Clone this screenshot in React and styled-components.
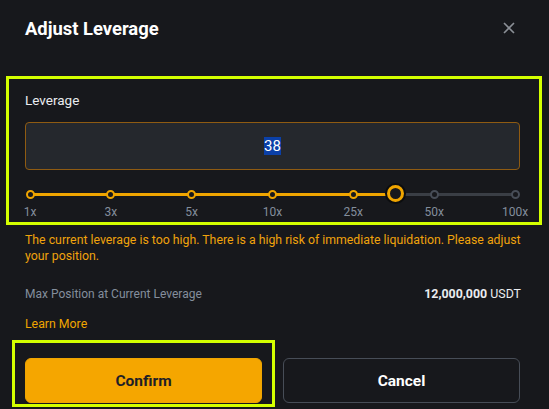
import React from 'react';
import styled, { createGlobalStyle } from 'styled-components';

const GlobalStyle = createGlobalStyle`
  body {
    margin: 0;
    background: #17181c;
    font-family: 'Roboto', 'Liberation Sans', sans-serif;
  }
`;

const Dialog = styled.div`
  width: 549px;
  height: 409px;
  overflow: hidden;
  background: #17181c;
  color: #eaecef;
`;

const Header = styled.div`
  display: flex;
  align-items: center;
  justify-content: space-between;
  height: 56px;
  padding: 0 34px 0 25px;
`;

const Title = styled.div`
  font-size: 18.4px;
  font-weight: 700;
  color: #ffffff;
`;

const Close = styled.button`
  display: flex;
  padding: 0;
  border: 0;
  background: none;
  cursor: pointer;
`;

const Highlight = styled.div`
  border: 3px solid #d4ff00;
`;

const LeverageBox = styled(Highlight)`
  margin: 20px 7px 0 6px;
  padding: 12px 19px 0 16px;
  height: 149px;
  box-sizing: border-box;
`;

const Label = styled.div`
  font-size: 13.5px;
  line-height: 18px;
  color: #eaecef;
`;

const Input = styled.div`
  margin-top: 13px;
  height: 48px;
  box-sizing: border-box;
  border: 1px solid #8f5b12;
  border-radius: 4px;
  background: #25282d;
  display: flex;
  align-items: center;
  justify-content: center;
`;

const Selected = styled.span`
  font-size: 15px;
  line-height: 18px;
  color: #ffffff;
  background: #0b40a8;
`;

const Slider = styled.div`
  position: relative;
  margin: 16px 5px 0;
  height: 16px;
`;

const Rail = styled.div`
  position: absolute;
  left: 0;
  right: 0;
  top: 7px;
  height: 3px;
  background: #3a3e45;
`;

const Fill = styled.div`
  position: absolute;
  left: 0;
  top: 7px;
  height: 3px;
  background: #f0a500;
`;

const Mark = styled.span`
  position: absolute;
  top: 4px;
  width: 9px;
  height: 9px;
  box-sizing: border-box;
  margin-left: -4.5px;
  border-radius: 50%;
  border: 2px solid ${p => (p.$active ? '#f0a500' : '#474d57')};
  background: #17181c;
`;

const Thumb = styled.span`
  position: absolute;
  top: -1px;
  width: 17px;
  height: 17px;
  box-sizing: border-box;
  margin-left: -8.5px;
  border-radius: 50%;
  border: 3px solid #f0a500;
  background: #17181c;
  box-shadow: 0 0 0 2px #0c0d0f;
`;

const Ticks = styled.div`
  position: relative;
  margin: 3px 5px 0;
  height: 14px;
`;

const Tick = styled.span`
  position: absolute;
  top: 0;
  transform: translateX(-50%);
  font-size: 12px;
  line-height: 14px;
  color: #848e9c;
`;

const Warning = styled.p`
  margin: 7px 25px 0;
  font-size: 12.3px;
  line-height: 16px;
  color: #f0a30c;
`;

const Row = styled.div`
  display: flex;
  justify-content: space-between;
  align-items: center;
  margin: 22px 28px 0 25px;
  line-height: 16px;
`;

const Muted = styled.span`
  font-size: 12px;
  color: #848e9c;
`;

const Value = styled.span`
  font-size: 12.4px;
  color: #eaecef;
  b {
    font-weight: 700;
  }
`;

const LearnMore = styled.a`
  display: block;
  margin: 14px 25px 0;
  font-size: 12.3px;
  line-height: 16px;
  color: #f0a500;
  cursor: pointer;
`;

const Actions = styled.div`
  display: flex;
  align-items: flex-start;
  gap: 8px;
  margin-top: 8px;
  padding-left: 12px;
`;

const ConfirmBox = styled(Highlight)`
  padding: 15px 10px 1px;
`;

const Button = styled.button`
  width: 237px;
  height: 45px;
  border-radius: 6px;
  font-family: inherit;
  font-size: 15.5px;
  font-weight: 700;
  cursor: pointer;
  border: 1px solid ${p => (p.$primary ? '#f0a500' : '#474d57')};
  background: ${p => (p.$primary ? '#f5a600' : 'transparent')};
  color: ${p => (p.$primary ? '#1e2026' : '#ffffff')};
  margin-top: ${p => (p.$primary ? 0 : 18)}px;
`;

const stops = ['1x', '3x', '5x', '10x', '25x', '50x', '100x'];

export default function App() {
  const value = 38;
  const pos = (4 + (value - 25) / 25) / 6;
  return (
    <Dialog>
      <GlobalStyle />
      <Header>
        <Title>Adjust Leverage</Title>
        <Close aria-label="close">
          <svg width="12" height="12" viewBox="0 0 12 12">
            <path d="M1 1L11 11M11 1L1 11" stroke="#8b8f96" strokeWidth="1.6" />
          </svg>
        </Close>
      </Header>
      <LeverageBox>
        <Label>Leverage</Label>
        <Input>
          <Selected>{value}</Selected>
        </Input>
        <Slider>
          <Rail />
          <Fill style={{ width: `${pos * 100}%` }} />
          {stops.map((s, i) => (
            <Mark key={s} $active={i / 6 <= pos} style={{ left: `${(i / 6) * 100}%` }} />
          ))}
          <Thumb style={{ left: `${pos * 100}%` }} />
        </Slider>
        <Ticks>
          {stops.map((s, i) => (
            <Tick key={s} style={{ left: `${(i / 6) * 100}%` }}>{s}</Tick>
          ))}
        </Ticks>
      </LeverageBox>
      <Warning>
        The current leverage is too high. There is a high risk of immediate liquidation. Please adjust your position.
      </Warning>
      <Row>
        <Muted>Max Position at Current Leverage</Muted>
        <Value><b>12,000,000</b> USDT</Value>
      </Row>
      <LearnMore>Learn More</LearnMore>
      <Actions>
        <ConfirmBox>
          <Button $primary>Confirm</Button>
        </ConfirmBox>
        <Button>Cancel</Button>
      </Actions>
    </Dialog>
  );
}
